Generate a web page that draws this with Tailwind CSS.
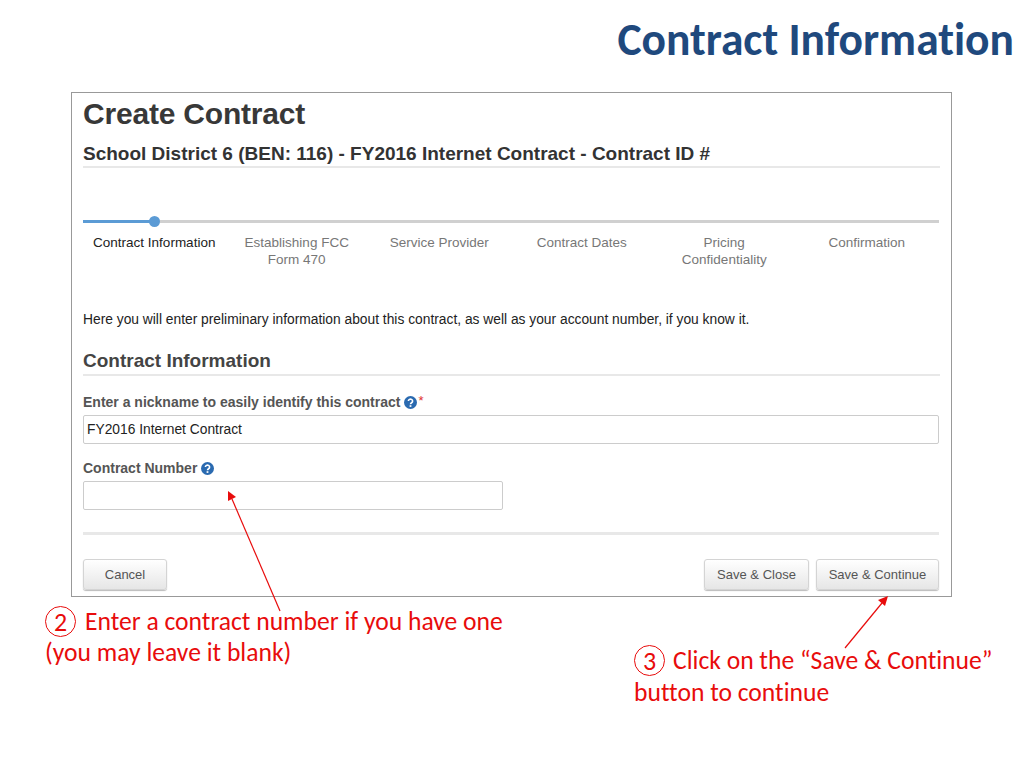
<!DOCTYPE html>
<html lang="en">
<head>
    <meta charset="UTF-8">
    <meta name="viewport" content="width=device-width, initial-scale=1.0">
    <title>Contract Information</title>
    <script src="https://cdn.jsdelivr.net/npm/@tailwindcss/browser@4"></script>
</head>
<body class="relative w-[1024px] h-[768px] overflow-hidden bg-white font-['Liberation_Sans',sans-serif]">

    <!-- Slide title -->
    <header class="h-[92px] pr-[10px] pt-[13px] text-right">
        <h1 class="font-['Carlito','Lato',sans-serif] [font-variant-ligatures:none] text-[45.5px] leading-[54px] font-bold text-[#1f497d]">Contract Information</h1>
    </header>

    <!-- Screenshot panel -->
    <main class="ml-[71px] w-[881px] h-[505px] border border-[#999] px-[11px] flex flex-col">
        <h2 class="mt-[3px] h-[36px] text-[30px] leading-[36px] font-bold text-[#383838] tracking-[-0.2px]">Create Contract</h2>
        <h3 class="mt-[8px] h-[28px] text-[19px] leading-[27px] font-bold text-[#333] border-b-2 border-[#e8e8e8]">School District 6 (BEN: 116) - FY2016 Internet Contract - Contract ID #</h3>

        <!-- Steps -->
        <div class="relative mt-[52px] h-[3px] mr-[1px] bg-[#d0d0d0]">
            <div class="w-[71px] h-[3px] bg-[#5b9bd5]"></div>
            <div class="absolute left-[66px] -top-[4px] w-[11px] h-[11px] rounded-full bg-[#5b9bd5]"></div>
        </div>
        <div class="mt-[11px] grid grid-cols-6 mr-[2px] h-[34px] text-[13.5px] leading-[17px] text-center text-[#777]">
            <div class="text-[#222]">Contract Information</div>
            <div>Establishing FCC<br>Form 470</div>
            <div>Service Provider</div>
            <div>Contract Dates</div>
            <div>Pricing<br>Confidentiality</div>
            <div>Confirmation</div>
        </div>

        <p class="mt-[42px] text-[13.8px] leading-[20px] text-[#222]">Here you will enter preliminary information about this contract, as well as your account number, if you know it.</p>

        <h3 class="mt-[19px] h-[27px] text-[19px] leading-[24px] font-bold text-[#444] border-b-2 border-[#e8e8e8]">Contract Information</h3>

        <!-- Form -->
        <label class="mt-[16px] h-[20px] flex items-center text-[14px] font-bold text-[#555]">
            Enter a nickname to easily identify this contract
            <svg class="ml-[4px] w-[13px] h-[13px]" viewBox="0 0 13 13"><circle cx="6.5" cy="6.5" r="6.5" fill="#2a6ab0"/><path d="M4.4 5.1a2.1 2 0 1 1 3.2 1.7c-.7.4-1.1.7-1.1 1.4" fill="none" stroke="#fff" stroke-width="1.6"/><rect x="5.6" y="9.2" width="1.8" height="1.7" fill="#fff"/></svg>
            <span class="self-start text-[13px] font-normal leading-[18px] text-[#e03030] ml-[1px]">*</span>
        </label>
        <input type="text" value="FY2016 Internet Contract" class="mt-[3px] h-[29px] mr-[1px] px-[3px] border border-[#ccc] rounded-[2px] text-[13.8px] text-[#222]">

        <label class="mt-[14px] h-[20px] flex items-center text-[14px] font-bold text-[#555]">
            Contract Number
            <svg class="ml-[4px] w-[13px] h-[13px]" viewBox="0 0 13 13"><circle cx="6.5" cy="6.5" r="6.5" fill="#2a6ab0"/><path d="M4.4 5.1a2.1 2 0 1 1 3.2 1.7c-.7.4-1.1.7-1.1 1.4" fill="none" stroke="#fff" stroke-width="1.6"/><rect x="5.6" y="9.2" width="1.8" height="1.7" fill="#fff"/></svg>
        </label>
        <input type="text" class="mt-[3px] h-[29px] w-[420px] border border-[#ccc] rounded-[2px]">

        <div class="mt-[22px] h-[3px] mr-[1px] bg-[#e8e8e8]"></div>

        <!-- Buttons -->
        <div class="mt-[24px] flex gap-[7px] mr-[1px] text-[13px] text-[#555]">
            <button class="w-[84px] h-[31px] mr-auto rounded-[3px] border border-[#d4d4d4] bg-linear-to-b from-white to-[#e6e6e6] shadow-[0_1px_1px_#bbb]">Cancel</button>
            <button class="w-[105px] h-[31px] rounded-[3px] border border-[#d4d4d4] bg-linear-to-b from-white to-[#e6e6e6] shadow-[0_1px_1px_#bbb]">Save &amp; Close</button>
            <button class="w-[123px] h-[31px] rounded-[3px] border border-[#d4d4d4] bg-linear-to-b from-white to-[#e6e6e6] shadow-[0_1px_1px_#bbb]">Save &amp; Continue</button>
        </div>
    </main>

    <!-- Callouts -->
    <div class="flex font-['Carlito','Lato',sans-serif] [font-variant-ligatures:none] text-[25.6px] leading-[31px] text-[#e80c0c]">
        <div class="ml-[45px] mt-[9px] w-[470px] whitespace-nowrap">
            <div class="flex items-center h-[31px]">
                <span class="w-[31px] h-[31px] mr-[9px] flex items-center justify-center rounded-full border-[1.5px] border-[#e80c0c] text-[26px] leading-[26px] font-light">2</span>
                <span>Enter a contract number if you have one</span>
            </div>
            <div>(you may leave it blank)</div>
        </div>
        <div class="ml-[119px] mt-[48px] whitespace-nowrap">
            <div class="flex items-center h-[31px]">
                <span class="w-[31px] h-[31px] mr-[8px] flex items-center justify-center rounded-full border-[1.5px] border-[#e80c0c] text-[26px] leading-[26px] font-light">3</span>
                <span>Click on the “Save &amp; Continue”</span>
            </div>
            <div class="mt-[1px]">button to continue</div>
        </div>
    </div>

    <!-- Arrows over the screenshot -->
    <svg class="absolute left-0 top-0 pointer-events-none" width="1024" height="768" viewBox="0 0 1024 768">
        <path d="M280 611 L232 499" stroke="#e80c0c" stroke-width="1.2" fill="none"/>
        <path d="M228 491 L236 497 L228 501 Z" fill="#e80c0c"/>
        <path d="M845 648 L882 603" stroke="#e80c0c" stroke-width="1.2" fill="none"/>
        <path d="M888 596 L885 606 L878 600 Z" fill="#e80c0c"/>
    </svg>

</body>
</html>
